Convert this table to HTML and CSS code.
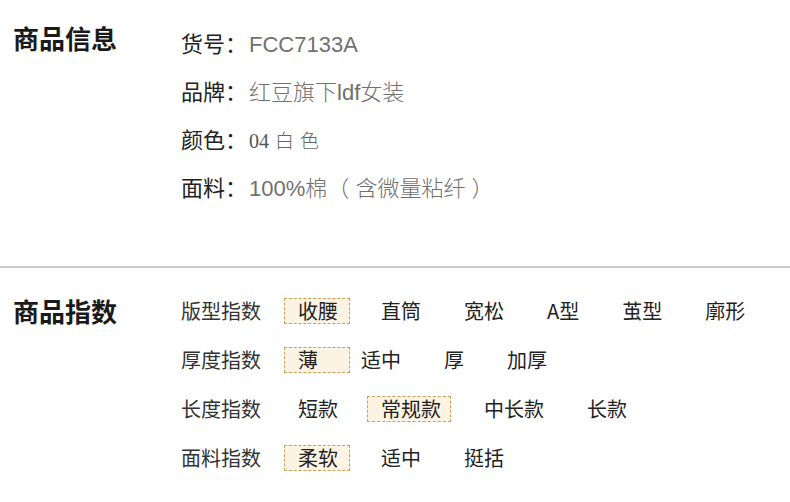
FILE: index.html
```html
<!DOCTYPE html>
<html lang="zh-CN">
<head>
    <meta charset="UTF-8">
    <title>商品详情</title>
    <link rel="stylesheet" href="styles.css">
</head>
<body>
    <section class="block info">
        <h2 class="block-title">商品信息</h2>
        <ul class="info-list">
            <li><span class="info-key">货号：</span><span class="info-val">FCC7133A</span></li>
            <li><span class="info-key">品牌：</span><span class="info-val">红豆旗下ldf女装</span></li>
            <li><span class="info-key">颜色：</span><span class="info-val serif">04<span class="spaced">白色</span></span></li>
            <li><span class="info-key">面料：</span><span class="info-val">100%棉（ 含微量粘纤 ）</span></li>
        </ul>
    </section>

    <hr class="divider">

    <section class="block index">
        <h2 class="block-title">商品指数</h2>
        <div class="index-list">
            <div class="index-row">
                <span class="index-key">版型指数</span>
                <span class="tag on">收腰</span>
                <span class="tag">直筒</span>
                <span class="tag">宽松</span>
                <span class="tag">A型</span>
                <span class="tag">茧型</span>
                <span class="tag">廓形</span>
            </div>
            <div class="index-row">
                <span class="index-key">厚度指数</span>
                <span class="tag on">薄</span>
                <span class="tag">适中</span>
                <span class="tag">厚</span>
                <span class="tag">加厚</span>
            </div>
            <div class="index-row">
                <span class="index-key">长度指数</span>
                <span class="tag">短款</span>
                <span class="tag on">常规款</span>
                <span class="tag">中长款</span>
                <span class="tag">长款</span>
            </div>
            <div class="index-row">
                <span class="index-key">面料指数</span>
                <span class="tag on">柔软</span>
                <span class="tag">适中</span>
                <span class="tag">挺括</span>
            </div>
        </div>
    </section>
</body>
</html>
```

FILE: styles.css
```css
* {
    margin: 0;
    padding: 0;
    box-sizing: border-box;
}

body {
    font-family: "Noto Sans CJK SC", "Noto Sans", sans-serif;
    color: #222;
    background: #fff;
}

.block {
    display: flex;
    align-items: flex-start;
    padding-left: 13px;
}

.block-title {
    width: 168px;
    flex-shrink: 0;
    font-size: 26px;
    font-weight: bold;
    line-height: 40px;
    color: #1a1a1a;
}

/* 商品信息 */
.info {
    padding-top: 18px;
    height: 266px;
}

.info-list {
    list-style: none;
}

.info-list li {
    font-size: 22px;
    line-height: 48px;
    height: 48px;
}

.info-key {
    color: #222;
}

.info-val {
    font-family: "Liberation Sans", "Noto Sans CJK SC Light", "Noto Sans CJK SC", sans-serif;
    font-weight: 300;
    color: #707070;
    margin-left: 2px;
}

.info-val.serif {
    font-family: "Liberation Serif", "Noto Sans CJK SC", serif;
    font-size: 20px;
    color: #555;
}

.info-val .spaced {
    margin-left: 6px;
    letter-spacing: 6px;
    font-size: 19px;
    color: #666;
}

.divider {
    border: none;
    height: 2px;
    background-color: #cacaca;
}

/* 商品指数 */
.index {
    padding-top: 18px;
}

.index .block-title {
    line-height: 50px;
}

.index-row {
    display: flex;
    align-items: center;
    height: 49px;
    font-size: 20px;
    color: #222;
}

.index-key {
    width: 117px;
    flex-shrink: 0;
    color: #333;
}

.tag {
    position: relative;
    z-index: 0;
    margin-right: 43px;
    line-height: 26px;
}

.tag.on::before {
    content: "";
    position: absolute;
    z-index: -1;
    top: 0;
    bottom: 0;
    left: -14px;
    width: max(64px, calc(100% + 22px));
    border: 1px dashed #cf9f5f;
    background-color: #fdf3e3;
}
```
